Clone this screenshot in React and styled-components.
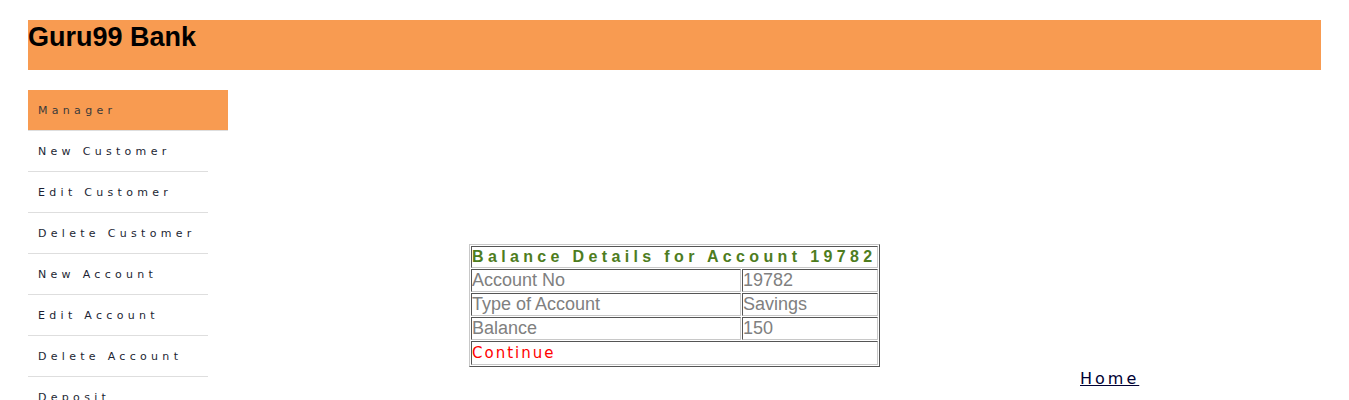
import styled, { createGlobalStyle } from "styled-components";

const GlobalStyle = createGlobalStyle`
  body {
    margin: 0;
    background: #fff;
    font-family: "Liberation Sans", Arial, sans-serif;
  }
`;

const Header = styled.header`
  margin: 20px 28px 0;
  height: 50px;
  background: #f89b51;
`;

const Title = styled.h2`
  margin: 0;
  padding-top: 2px;
  font-size: 27px;
  font-weight: bold;
  color: #000;
`;

const Layout = styled.div`
  display: grid;
  grid-template-columns: 1fr auto 1fr;
  margin-top: 20px;
`;

const Menu = styled.ul`
  list-style: none;
  margin: 0 0 0 28px;
  padding: 0;
  width: 200px;
`;

const MenuItem = styled.li`
  height: 40px;
  line-height: 42px;
  padding-left: 10px;
  width: ${(p) => (p.$active ? "190px" : "170px")};
  background: ${(p) => (p.$active ? "#f89b51" : "transparent")};
  border-bottom: 1px solid #dedede;
  font-family: "DejaVu Sans", Verdana, sans-serif;
  font-size: 11px;
  letter-spacing: 4.3px;
  color: ${(p) => (p.$active ? "#3a3a3a" : "#1c1f33")};
  white-space: nowrap;
`;

const Main = styled.div`
  padding-top: 154px;
`;

const Table = styled.table`
  width: 411px;
  table-layout: fixed;
  border-collapse: separate;
  border-spacing: 1px;
  border: 1px solid;
  border-color: #c8c8c8 #555 #555 #c8c8c8;
`;

const Cell = styled.td`
  padding: 0;
  border: 1px solid;
  border-color: #555 #c8c8c8 #c8c8c8 #555;
  font-size: 18px;
  line-height: 21px;
  color: #808080;
  white-space: nowrap;
`;

const HeadCell = styled(Cell)`
  font-size: 16px;
  line-height: 20px;
  font-weight: bold;
  letter-spacing: 4.35px;
  color: #4e7d1e;
`;

const ContinueLink = styled.a`
  font-family: "DejaVu Sans", sans-serif;
  font-size: 15px;
  line-height: 21px;
  letter-spacing: 2px;
  color: #f00;
  text-decoration: none;
`;

const Aside = styled.div`
  padding: 279px 0 0 200px;
`;

const HomeLink = styled.a`
  font-family: "DejaVu Sans", sans-serif;
  font-size: 16px;
  letter-spacing: 3px;
  color: #000033;
  text-decoration: underline;
`;

const menu = [
  "Manager",
  "New Customer",
  "Edit Customer",
  "Delete Customer",
  "New Account",
  "Edit Account",
  "Delete Account",
  "Deposit",
];

const rows = [
  ["Account No", "19782"],
  ["Type of Account", "Savings"],
  ["Balance", "150"],
];

export default function App() {
  return (
    <>
      <GlobalStyle />
      <Header>
        <Title>Guru99 Bank</Title>
      </Header>
      <Layout>
        <Menu>
          {menu.map((m, i) => (
            <MenuItem key={m} $active={i === 0}>
              {m}
            </MenuItem>
          ))}
        </Menu>
        <Main>
          <Table>
            <colgroup>
              <col style={{ width: 270 }} />
              <col />
            </colgroup>
            <tbody>
              <tr>
                <HeadCell colSpan={2}>Balance Details for Account 19782</HeadCell>
              </tr>
              {rows.map(([k, v]) => (
                <tr key={k}>
                  <Cell>{k}</Cell>
                  <Cell>{v}</Cell>
                </tr>
              ))}
              <tr>
                <Cell colSpan={2}>
                  <ContinueLink href="#">Continue</ContinueLink>
                </Cell>
              </tr>
            </tbody>
          </Table>
        </Main>
        <Aside>
          <HomeLink href="#">Home</HomeLink>
        </Aside>
      </Layout>
    </>
  );
}
